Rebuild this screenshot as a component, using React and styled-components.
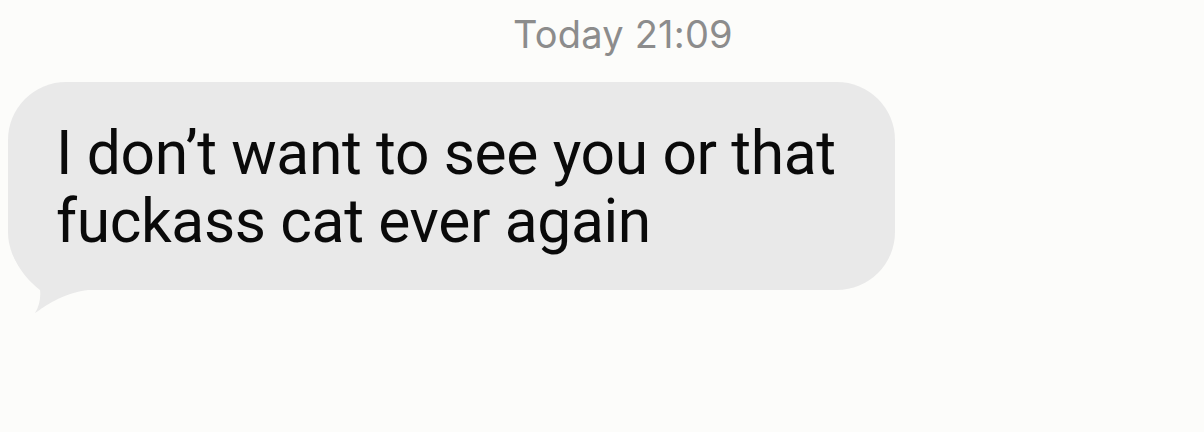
import React from "react";
import styled, { createGlobalStyle } from "styled-components";

const Global = createGlobalStyle`
  html, body {
    margin: 0;
    padding: 0;
    background: #fcfcfa;
  }
  body {
    font-family: Inter, "Liberation Sans", Arial, sans-serif;
    -webkit-font-smoothing: antialiased;
  }
`;

const Screen = styled.div`
  width: 1204px;
  height: 432px;
  box-sizing: border-box;
  background: #fcfcfa;
  display: flex;
  flex-direction: column;
  overflow: hidden;
`;

const Stamp = styled.div`
  align-self: center;
  margin: 10px 0 0 42px;
  font-size: 38px;
  line-height: 48px;
  color: #8c8c8c;
  letter-spacing: 0.2px;
`;

const Row = styled.div`
  display: flex;
  padding: 24px 0 0 8px;
`;

const Bubble = styled.div`
  position: relative;
  width: 887px;
  height: 208px;
  box-sizing: border-box;
  padding: 38px 40px 0 48px;
  background: #e9e9e9;
  border-radius: 58px;
`;

const Message = styled.p`
  position: relative;
  z-index: 1;
  margin: 0;
  white-space: nowrap;
  color: #0a0a0a;
  font-family: Roboto, "Liberation Sans", Arial, sans-serif;
  font-size: 60.5px;
  line-height: 68px;
  letter-spacing: -0.35px;
`;

const Tail = styled.svg`
  position: absolute;
  left: 0;
  top: 150px;
  width: 100px;
  height: 90px;
  overflow: visible;
`;

export default function App() {
  return (
    <>
      <Global />
      <Screen>
        <Stamp>Today 21:09</Stamp>
        <Row>
          <Bubble>
            <Message>
              I don’t want to see you or that
              <br />
              fuckass cat ever again
            </Message>
            <Tail viewBox="0 0 100 90">
              <path
                d="M4 0 L4 20 C 10 38, 22 50, 32 58 C 33 66, 31 75, 27 81 C 38 74, 52 62, 80 58 L 80 0 Z"
                fill="#e9e9e9"
              />
            </Tail>
          </Bubble>
        </Row>
      </Screen>
    </>
  );
}
